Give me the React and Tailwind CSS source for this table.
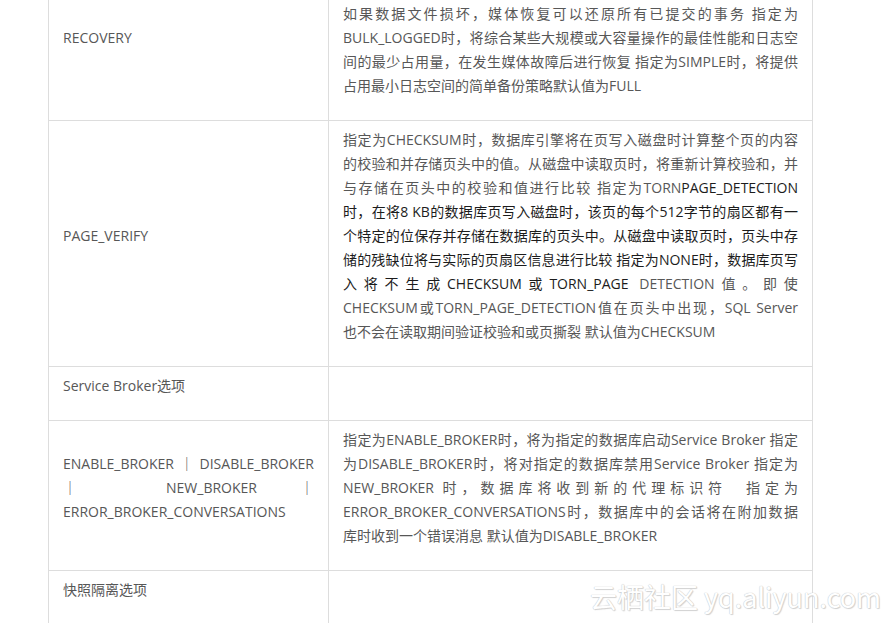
import React from "react";

function Row({ left, right }) {
  return (
    <div className="flex border-b border-[#dddddd]">
      <div className="flex w-[280px] shrink-0 flex-col justify-center border-r border-[#dddddd] px-[14px] pt-[7px] pb-[22px]">
        {left}
      </div>
      <div className="w-[484px] shrink-0 border-r border-[#dddddd] px-[14px] pt-[7px] pb-[22px]">
        {right}
      </div>
    </div>
  );
}

function J({ children }) {
  return <div className="whitespace-nowrap text-justify [text-align-last:justify]">{children}</div>;
}

function L({ children }) {
  return <div className="whitespace-nowrap">{children}</div>;
}

const dark = "text-[#1c1c1c]";

export default function App() {
  return (
    <div className="relative h-[623px] w-[893px] overflow-hidden bg-white font-['Open_Sans','Noto_Sans_CJK_SC',sans-serif] text-[14px] leading-[24px] text-[#575757]">
      <div className="ml-12 mt-[-30px] w-[765px] border-l border-t border-[#dddddd]">
        <Row
          left={<div>RECOVERY</div>}
          right={
            <>
              <div className="h-6" />
              <J>如果数据文件损坏，媒体恢复可以还原所有已提交的事务 指定为</J>
              <J>BULK_LOGGED时，将综合某些大规模或大容量操作的最佳性能和日志空</J>
              <J>间的最少占用量，在发生媒体故障后进行恢复 指定为SIMPLE时，将提供</J>
              <L>占用最小日志空间的简单备份策略默认值为FULL</L>
            </>
          }
        />
        <Row
          left={<div>PAGE_VERIFY</div>}
          right={
            <>
              <J>指定为CHECKSUM时，数据库引擎将在页写入磁盘时计算整个页的内容</J>
              <J>的校验和并存储页头中的值。从磁盘中读取页时，将重新计算校验和，并</J>
              <J>
                与存储在页头中的校验和值进行比较 指定为TORN<span className={dark}>PAGE_DETECTION</span>
              </J>
              <J>
                <span className={dark}>时，在将8 KB的数据库页写入磁盘时，该页的每个512字节的扇区都有一</span>
              </J>
              <J>
                <span className={dark}>个特定的位保存并存储在数据库的页头中。从磁盘中读取页时，页头中存</span>
              </J>
              <J>
                <span className={dark}>储的残缺位将与实际的页扇区信息进行比较 指定为NONE时，数据库页写</span>
              </J>
              <div className="flex justify-between whitespace-nowrap">
                <span className={dark}>入</span>
                <span className={dark}>将</span>
                <span className={dark}>不</span>
                <span className={dark}>生</span>
                <span className={dark}>成</span>
                <span className={dark}>CHECKSUM</span>
                <span className={dark}>或</span>
                <span className={dark}>TORN_PAGE</span>
                <span className="ml-[4px]">DETECTION</span>
                <span>值</span>
                <span>。</span>
                <span>即</span>
                <span>使</span>
              </div>
              <J>CHECKSUM或TORN_PAGE_DETECTION值在页头中出现，SQL Server</J>
              <L>也不会在读取期间验证校验和或页撕裂 默认值为CHECKSUM</L>
            </>
          }
        />
        <Row left={<div>Service Broker选项</div>} right={<div>&nbsp;</div>} />
        <Row
          left={
            <>
              <div className="flex justify-between whitespace-nowrap">
                <span>ENABLE_BROKER</span>
                <span>｜</span>
                <span>DISABLE_BROKER</span>
              </div>
              <div className="flex justify-between whitespace-nowrap">
                <span>｜</span>
                <span className="ml-[46px]">NEW_BROKER</span>
                <span>｜</span>
              </div>
              <L>ERROR_BROKER_CONVERSATIONS</L>
            </>
          }
          right={
            <>
              <J>指定为ENABLE_BROKER时，将为指定的数据库启动Service Broker 指定</J>
              <J>为DISABLE_BROKER时，将对指定的数据库禁用Service Broker 指定为</J>
              <J>NEW_BROKER 时，数据库将收到新的代理标识符　指定为</J>
              <J>ERROR_BROKER_CONVERSATIONS时，数据库中的会话将在附加数据</J>
              <L>库时收到一个错误消息 默认值为DISABLE_BROKER</L>
            </>
          }
        />
        <Row left={<div>快照隔离选项</div>} right={<div>&nbsp;</div>} />
      </div>
      <div className="pointer-events-none absolute left-[590px] top-[583px] whitespace-nowrap font-['Noto_Sans_CJK_SC',sans-serif] text-[27px] leading-none text-white [text-shadow:0_0_1px_#c8c8c8,0_0_1px_#c8c8c8,1px_1px_1px_#d4d4d4]">
        云栖社区 yq.aliyun.com
      </div>
    </div>
  );
}
